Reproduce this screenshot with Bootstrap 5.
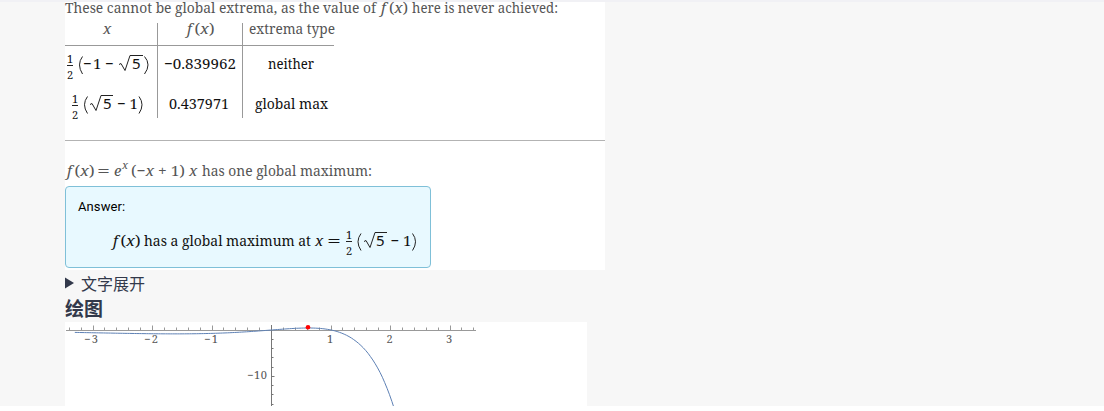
<!DOCTYPE html>
<html lang="zh">
<head>
<meta charset="utf-8">
<meta name="viewport" content="width=device-width, initial-scale=1">
<title>绘图</title>
<link rel="stylesheet" href="https://cdn.jsdelivr.net/npm/bootstrap@5.3.0/dist/css/bootstrap.min.css">
<style>
html{overflow:hidden;background:#fff}
body{background:#fff;color:#32394b}
.page{height:406px;background:#f7f7f7;border-top:2px solid #f1f1f5;padding-left:65px}
.result{width:540px;height:268px}
.math{display:block;overflow:visible;font-family:"Noto Serif","Liberation Serif",serif;font-size:15px;font-weight:400;fill:#555}
.math.ink{fill:#111}
.math .it{font-style:italic}
.math .sm{font-size:11px;text-anchor:middle}
.math .rad{font-family:"Noto Sans","Liberation Sans",sans-serif}
.math .ln{fill:none;stroke:#222}
.extrema{width:269px;table-layout:fixed}
.extrema th,.extrema td{padding:0;vertical-align:top}
.extrema thead tr{height:22px}
.extrema tbody tr{height:36px}
.extrema th{border-bottom:1px solid #999}
.extrema .rule{border-left:1px solid #999}
.split{height:23px;border-bottom:1px solid #b3b3b3}
.answer{width:366px;height:82px;background:#e8f9ff;border:1px solid #7fc0d8;border-radius:4px;padding:12px 0 0 12px}
.answer-title{font:13px/16px Roboto,sans-serif;color:#000;letter-spacing:.1px}
.more{height:26px;gap:7px;font:16px/24px "Noto Sans CJK SC",sans-serif}
.section-title{font:700 19px/24px "Noto Sans CJK SC",sans-serif;height:26px}
.plot{width:522px;height:84px}
.plot svg{display:block;font-family:"Noto Serif","Liberation Serif",serif;font-size:11px;fill:#555}
</style>
<script src="https://cdn.jsdelivr.net/npm/bootstrap@5.3.0/dist/js/bootstrap.bundle.min.js"></script>
</head>
<body>
<main class="page">
<section class="result bg-white">
  <svg class="math" width="540" height="21">
    <text x="0" y="11" textLength="311" lengthAdjust="spacingAndGlyphs">These cannot be global extrema, as the value of</text>
    <text class="it" x="316" y="11">f</text><text x="324" y="11" textLength="19" lengthAdjust="spacingAndGlyphs">(<tspan class="it">x</tspan>)</text>
    <text x="347" y="11" textLength="146" lengthAdjust="spacingAndGlyphs">here is never achieved:</text>
  </svg>
  <table class="extrema">
    <colgroup><col style="width:92px"><col style="width:85px"><col style="width:92px"></colgroup>
    <thead><tr>
      <th><svg class="math" width="90" height="21"><text class="it" x="38" y="11">x</text></svg></th>
      <th class="rule"><svg class="math" width="80" height="21"><text class="it" x="29" y="11">f</text><text x="36.500" y="11" textLength="20" lengthAdjust="spacingAndGlyphs">(<tspan class="it">x</tspan>)</text></svg></th>
      <th class="rule"><svg class="math" width="91" height="21"><text x="6" y="11" textLength="86" lengthAdjust="spacingAndGlyphs">extrema type</text></svg></th>
    </tr></thead>
    <tbody>
    <tr>
      <td><svg class="math ink" width="90" height="36">
        <text class="sm" x="5" y="17">1</text><path class="ln" d="M2 19.500h6"/><text class="sm" x="5" y="33">2</text>
        <path class="ln" d="M17.500 10.500q-6 8 0 17.500M79.500 10.500q7 8 0 17.500"/>
        <text x="18" y="23">−</text><text x="28" y="23">1</text><text x="40" y="23">−</text>
        <path class="ln" d="M54 18.500l2-1 4 7 5-15h13"/><text class="rad" x="67" y="23">5</text></svg></td>
      <td class="rule"><svg class="math ink" width="80" height="36"><text x="6" y="23" textLength="72" lengthAdjust="spacingAndGlyphs">−0.839962</text></svg></td>
      <td class="rule"><svg class="math ink" width="90" height="36"><text x="25" y="23" textLength="46" lengthAdjust="spacingAndGlyphs">neither</text></svg></td>
    </tr>
    <tr>
      <td><svg class="math ink" width="90" height="36">
        <text class="sm" x="10" y="21">1</text><path class="ln" d="M7 23.500h6"/><text class="sm" x="10" y="37">2</text>
        <path class="ln" d="M22.500 14.500q-6 8 0 17M74 14.500q6 8 0 17"/>
        <path class="ln" d="M25 22.500l2-1 4 7 5-15h12"/><text class="rad" x="38" y="27">5</text>
        <text x="52" y="27">−</text><text x="64.500" y="27">1</text></svg></td>
      <td class="rule"><svg class="math ink" width="80" height="36"><text x="11" y="27" textLength="60" lengthAdjust="spacingAndGlyphs">0.437971</text></svg></td>
      <td class="rule"><svg class="math ink" width="90" height="36"><text x="12" y="27" textLength="73" lengthAdjust="spacingAndGlyphs">global max</text></svg></td>
    </tr>
    </tbody>
  </table>
  <div class="split"></div>
  <svg class="math" width="540" height="45">
    <text class="it" x="2" y="35">f</text><text x="9.500" y="35" textLength="20" lengthAdjust="spacingAndGlyphs">(<tspan class="it">x</tspan>)</text>
    <text x="32" y="35" textLength="13" lengthAdjust="spacingAndGlyphs">=</text><text class="it" x="49" y="35">e</text><text class="it" x="57" y="28" font-size="11">x</text>
    <text x="66" y="35" textLength="54" lengthAdjust="spacingAndGlyphs">(−<tspan class="it">x</tspan> + 1)</text><text class="it" x="124" y="35">x</text>
    <text x="137" y="35" textLength="170" lengthAdjust="spacingAndGlyphs">has one global maximum:</text>
  </svg>
  <div class="answer">
    <div class="answer-title">Answer:</div>
    <svg class="math ink" width="345" height="50">
      <text class="it" x="35" y="31">f</text><text x="42.500" y="31" textLength="20" lengthAdjust="spacingAndGlyphs">(<tspan class="it">x</tspan>)</text>
      <text x="66" y="31" textLength="167" lengthAdjust="spacingAndGlyphs">has a global maximum at</text><text class="it" x="237" y="31">x</text>
      <text x="249" y="31" textLength="14" lengthAdjust="spacingAndGlyphs">=</text>
      <text class="sm" x="271" y="24">1</text><path class="ln" d="M268 26.500h6"/><text class="sm" x="271" y="40">2</text>
      <path class="ln" d="M283 18.500q-6 8 0 17M334.500 18.500q6 8 0 17"/>
      <path class="ln" d="M286 26.500l2-1 4 7 5-15h12"/><text class="rad" x="298" y="31">5</text>
      <text x="312.500" y="31">−</text><text x="325" y="31">1</text>
    </svg>
  </div>
</section>
<div class="more d-flex align-items-center"><svg width="9" height="12"><path d="M0 .5l9 5.500-9 5.500z" fill="#32394b"/></svg><span>文字展开</span></div>
<h2 class="section-title m-0">绘图</h2>
<div class="plot bg-white">
<svg width="522" height="84">
  <g fill="none" stroke="#999"><path d="M1 8.500h410"/><path id="ticks"/></g>
  <path d="M206.500 3v81M206.500 17.500h2M206.500 26.500h2M206.500 35.500h2M206.500 45.500h2M206.500 54.500h3M206.500 63.500h2M206.500 72.500h2M206.500 82.500h2" stroke="#777"/>
  <path id="curve" fill="none" stroke="#5e81b5"/>
  <circle cx="243" cy="5.300" r="2.300" fill="red"/>
  <g><text x="19" y="21" textLength="14">−3</text><text x="79" y="21" textLength="14">−2</text><text x="139" y="21" textLength="14">−1</text><text x="262" y="21">1</text><text x="321.500" y="21">2</text><text x="381" y="21">3</text><text x="182" y="57" textLength="20">−10</text></g>
</svg>
</div>
</main>
<script>
  let ticks = '', curve = '';
  for (let i = -17; i <= 17; i++) ticks += `M${Math.round(206 + i * 11.9) + .5} 8.5v${i % 5 ? -3 : -5}`;
  for (let x = -3.3; x <= 2.08; x += .04) curve += (curve ? 'L' : 'M') + (206.5 + x * 59.6).toFixed(1) + ' ' + (8 - Math.exp(x) * (1 - x) * x * 4.6).toFixed(2);
  document.getElementById('ticks').setAttribute('d', ticks);
  document.getElementById('curve').setAttribute('d', curve);
</script>
</body>
</html>
